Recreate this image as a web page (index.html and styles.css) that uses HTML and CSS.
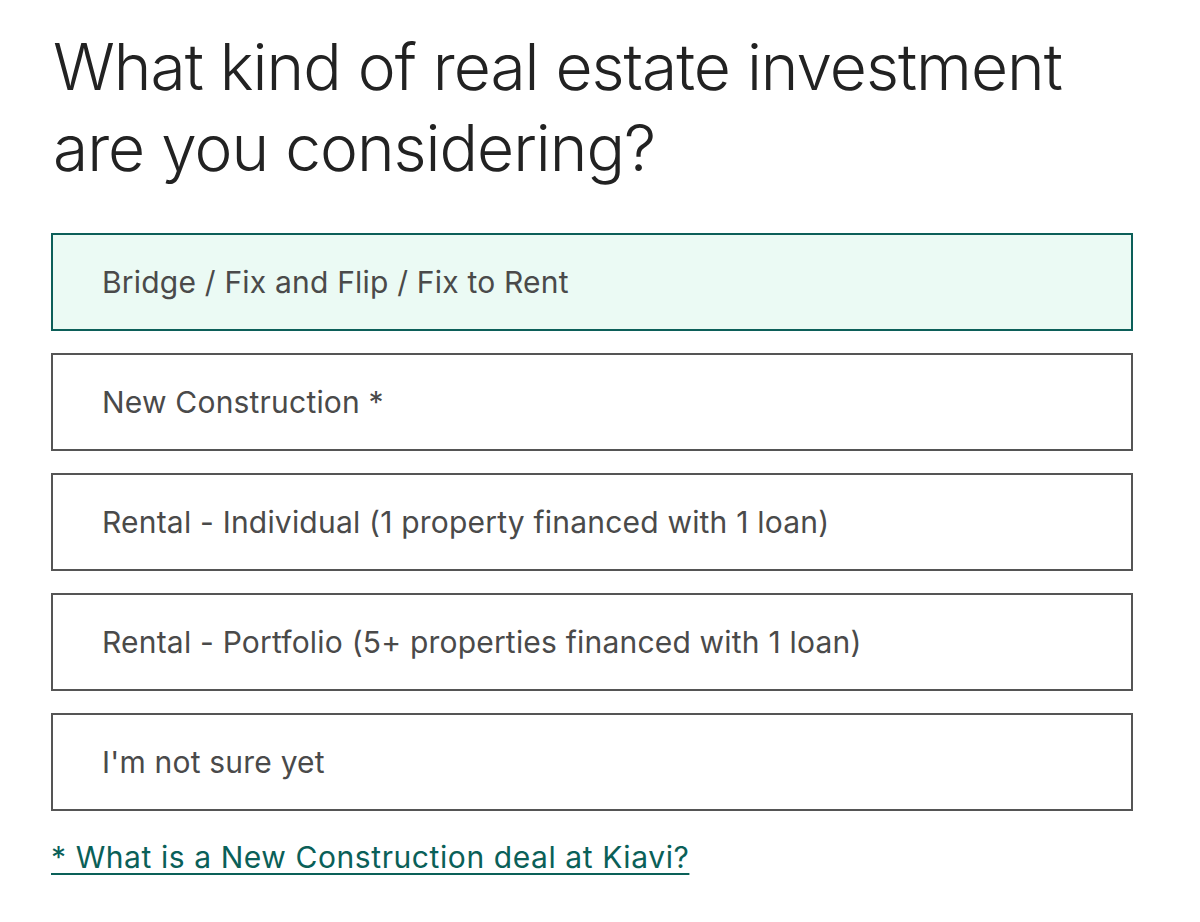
FILE: index.html
```html
<!DOCTYPE html>
<html lang="en">
<head>
<meta charset="utf-8">
<title>Investment type</title>
<link rel="stylesheet" href="styles.css">
</head>
<body>
<main class="question">
  <h1 class="title">What kind of real estate investment are you considering?</h1>
  <div class="options">
    <button class="option selected">Bridge / Fix and Flip / Fix to Rent</button>
    <button class="option">New Construction *</button>
    <button class="option">Rental - Individual (1 property financed with 1 loan)</button>
    <button class="option">Rental - Portfolio (5+ properties financed with 1 loan)</button>
    <button class="option">I'm not sure yet</button>
  </div>
  <a class="note" href="#">* What is a New Construction deal at Kiavi?</a>
</main>
</body>
</html>
```

FILE: styles.css
```css
html, body {
  margin: 0;
  padding: 0;
  background: #ffffff;
}
body {
  font-family: Inter, "Noto Sans", sans-serif;
  color: #222222;
}
.question {
  width: 1082px;
  margin-left: 51px;
  padding-top: 26px;
}
.title {
  margin: 0 0 0 2px;
  font-size: 64px;
  line-height: 81px;
  font-weight: 300;
  letter-spacing: -1px;
  color: #222222;
  width: 1060px;
}
.options {
  display: flex;
  flex-direction: column;
  gap: 22px;
  margin-top: 45px;
}
.option {
  display: block;
  box-sizing: border-box;
  width: 100%;
  height: 98px;
  padding: 0 0 0 49px;
  text-align: left;
  border: 2px solid #555555;
  background: #ffffff;
  font-family: Inter, "Noto Sans", sans-serif;
  font-size: 30px;
  letter-spacing: 0.2px;
  color: #4a4a4a;
  cursor: pointer;
}
.option.selected {
  border-color: #0c5f59;
  background: #ebfaf4;
}
.note {
  display: inline-block;
  margin-top: 28px;
  font-size: 30px;
  letter-spacing: 0.58px;
  color: #0a6058;
  text-decoration: underline;
  text-underline-offset: 5px;
  text-decoration-thickness: 2px;
}
```
